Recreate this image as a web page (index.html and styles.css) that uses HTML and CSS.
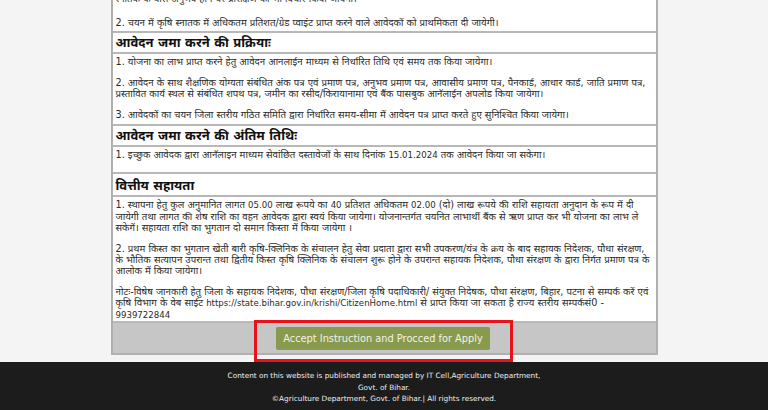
FILE: index.html
```html
<!DOCTYPE html>
<html lang="hi">
<head>
<meta charset="utf-8">
<title>Instructions</title>
<link rel="stylesheet" href="styles.css">
</head>
<body>
<main class="page">
  <div class="sheet">
    <div class="cell cell-first">
      <p>स्नातक के पास अनुभव होने पर प्रशिक्षण का भी विचार किया जायेगा।</p>
      <p>2. चयन में कृषि स्नातक में अधिकतम प्रतिशत/ग्रेड प्वाइंट प्राप्त करने वाले आवेदकों को प्राथमिकता दी जायेगी।</p>
    </div>
    <h2 class="cell head">आवेदन जमा करने की प्रक्रियाः</h2>
    <div class="cell">
      <p>1. योजना का लाभ प्राप्त करने हेतु आवेदन आनलाईन माध्यम से निर्धारित तिथि एवं समय तक किया जायेगा।</p>
      <p>2. आवेदन के साथ शैक्षणिक योग्यता संबंधित अंक पत्र एवं प्रमाण पत्र, अनुभव प्रमाण पत्र, आवासीय प्रमाण पत्र, पैनकार्ड, आधार कार्ड, जाति प्रमाण पत्र, प्रस्तावित कार्य स्थल से संबंधित शपथ पत्र, जमीन का रसीद/किरायानामा एवं बैंक पासबुक आनॅलाईन अपलोड किया जायेगा।</p>
      <p>3. आवेदकों का चयन जिला स्तरीय गठित समिति द्वारा निर्धारित समय-सीमा में आवेदन पत्र प्राप्त करते हुए सुनिश्चित किया जायेगा।</p>
    </div>
    <h2 class="cell head">आवेदन जमा करने की अंतिम तिथिः</h2>
    <div class="cell cell-date">
      <p>1. इच्छुक आवेदक द्वारा आनॅलाइन माध्यम सेवांछित दस्तावेजों के साथ दिनांक <span class="lat">15.01.2024</span> तक आवेदन किया जा सकेगा।</p>
    </div>
    <h2 class="cell head head-gap">वित्तीय सहायता</h2>
    <div class="cell cell-last">
      <p>1. स्थापना हेतु कुल अनुमानित लागत <span class="lat">05.00</span> लाख रूपये का <span class="lat">40</span> प्रतिशत अधिकतम <span class="lat">02.00</span> (दो) लाख रूपये की राशि सहायता अनुदान के रूप में दी जायेगी तथा लागत की शेष राशि का वहन आवेदक द्वारा स्वयं किया जायेगा। योजनान्तर्गत चयनित लाभार्थी बैंक से ऋण प्राप्त कर भी योजना का लाभ ले सकेगें। सहायता राशि का भुगतान दो समान किस्ता में किया जायेगा ।</p>
      <p>2. प्रथम किस्त का भुगतान खेती बारी कृषि-क्लिनिक के संचालन हेतु सेवा प्रदाता द्वारा सभी उपकरण/यंत्र के क्रय के बाद सहायक निदेशक, पौधा संरक्षण, के भौतिक सत्यापन उपरान्त तथा द्वितीय किस्त कृषि क्लिनिक के संचालन शुरू होने के उपरान्त सहायक निदेशक, पौधा संरक्षण के द्वारा निर्गत प्रमाण पत्र के आलोक में किया जायेगा।</p>
      <p>नोटः-विषेष जानकारी हेतु जिला के सहायक निदेशक, पौधा संरक्षण/जिला कृषि पदाधिकारी/ संयुक्त निदेषक, पौधा संरक्षण, बिहार, पटना से सम्पर्क करें एवं कृषि विभाग के वेब साईट <span class="lat">https://state.bihar.gov.in/krishi/CitizenHome.html</span> से प्राप्त किया जा सकता है राज्य स्तरीय सम्पर्कसं0 - <span class="lat">9939722844</span></p>
    </div>
    <div class="actions">
      <div class="highlight">
        <button class="btn" type="button">Accept Instruction and Procced for Apply</button>
      </div>
    </div>
  </div>
</main>
<footer class="footer">
  <p>Content on this website is published and managed by IT Cell,Agriculture Department, Govt. of Bihar.</p>
  <p>©Agriculture Department, Govt. of Bihar.| All rights reserved.</p>
</footer>
</body>
</html>
```
FILE: styles.css
```css
html, body {
  margin: 0;
  padding: 0;
}
body {
  background: #f4f4f4;
  font-family: "DejaVu Sans", Verdana, "Noto Sans", sans-serif;
  color: #2a2a2a;
  overflow: hidden;
  height: 410px;
}
.page {
  display: flex;
  justify-content: center;
  margin-top: -9px;
  padding-bottom: 7px;
}
.sheet {
  width: 543px;
  background: #fff;
  border: 2px solid #b0b0b0;
  border-top: none;
}
.cell {
  margin: 0;
  padding: 2px 3px 4px;
  border-bottom: 2px solid #b8b8b8;
}
.cell p {
  margin: 0 0 10px;
  font-size: 9.7px;
  line-height: 11px;
}
.cell p:last-child {
  margin-bottom: 0;
}
.lat {
  font-size: 8.6px;
}
.cell-first {
  padding-bottom: 3px;
}
.cell-first p:first-child {
  margin-bottom: 13px;
}
.head {
  font-size: 13px;
  font-weight: bold;
  line-height: 19px;
  padding: 0 3px;
  color: #111;
}
.cell-date {
  padding-bottom: 11px;
}
.head-gap {
  padding-top: 2px;
}
.cell-last {
  padding-bottom: 0;
}
.actions {
  background: #c6c6c6;
  height: 30px;
  position: relative;
}
.highlight {
  position: absolute;
  left: 141px;
  top: -3px;
  width: 253px;
  height: 36px;
  border: 3px solid #e8121a;
  display: flex;
  align-items: flex-start;
  justify-content: center;
}
.btn {
  margin-top: 4px;
  background: #879a4e;
  color: #f2f2e6;
  border: none;
  border-radius: 2px;
  font-family: "DejaVu Sans", Verdana, sans-serif;
  font-size: 9.8px;
  width: 214px;
  height: 23px;
  padding: 0;
}
.footer {
  background: #1c1c1c;
  color: #ececec;
  height: 48px;
  padding-top: 8px;
  text-align: center;
  font-family: "DejaVu Sans", Verdana, sans-serif;
  font-size: 7.3px;
  line-height: 11.5px;
}
.footer p {
  margin: 0 auto;
  width: 330px;
}
```
